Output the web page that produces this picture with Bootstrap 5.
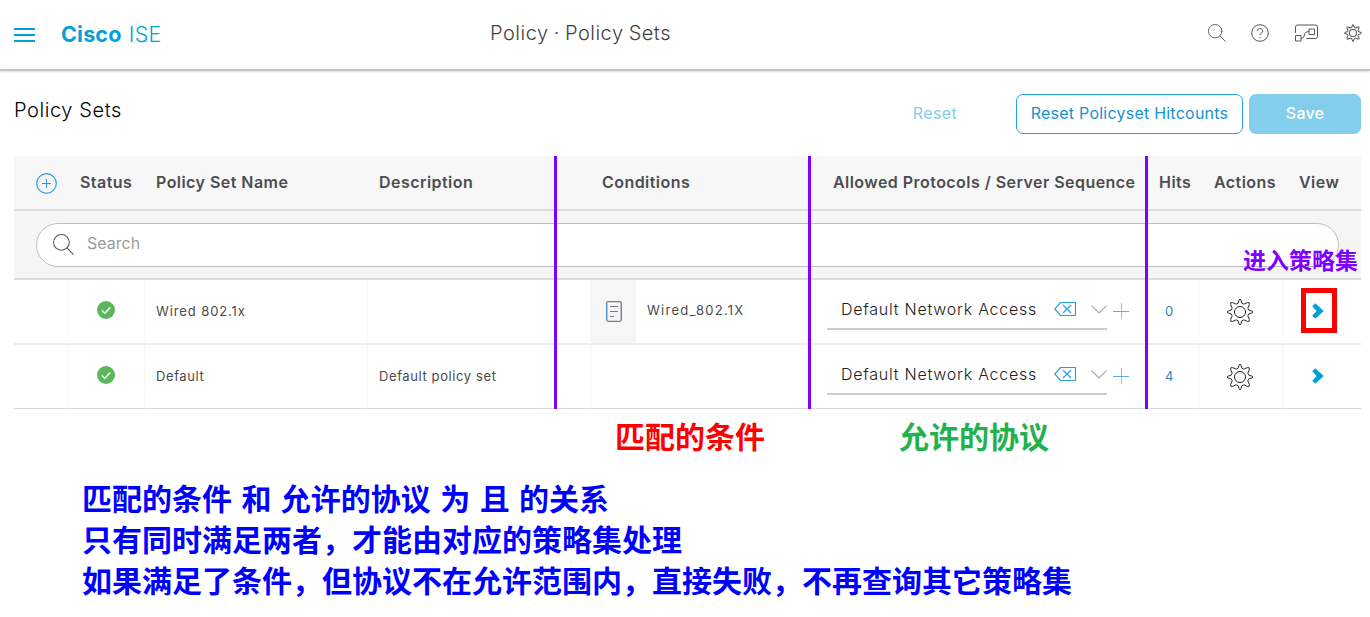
<!DOCTYPE html>
<html lang="zh-CN">
<head>
<meta charset="utf-8">
<meta name="viewport" content="width=device-width, initial-scale=1">
<title>Cisco ISE - Policy Sets</title>
<link href="https://cdn.jsdelivr.net/npm/bootstrap@5.3.0/dist/css/bootstrap.min.css" rel="stylesheet">
<style>
  body { font-family: Inter, "Noto Sans CJK SC", sans-serif; color: #4a4a4c; background: #fff; overflow: hidden; height: 617px; }
  svg { display: block; flex: none; overflow: visible; }
  .topbar { height: 71px; border-bottom: 2px solid #c6c6c6; box-shadow: 0 1px 2px rgba(0,0,0,.12); padding: 0 8px 0 14px; }
  .brand { width: 429px; margin: -2px 0 0 26px; font-size: 21.5px; font-weight: 300; color: #049fd9; line-height: 30px; letter-spacing: .2px; word-spacing: 1px; }
  .brand b { font-weight: 700; }
  .crumb { font-size: 20px; font-weight: 300; color: #3f3f41; line-height: 30px; letter-spacing: .5px; word-spacing: -1px; margin-top: -4px; }
  .tools { color: #58585b; margin-top: -3px; }
  .tool-find { margin-right: 25px; }
  .tool-map { margin: 0 25px 0 26px; }
  .heading { height: 85px; padding: 23px 9px 0 14px; }
  .heading h1 { font-size: 20px; font-weight: 300; color: #000; letter-spacing: .58px; line-height: 33px; margin: 0; }
  .act { height: 40px; border-radius: 7px; font-size: 16px; padding: 0; letter-spacing: .4px; line-height: 36px; padding-bottom: 2px; }
  .act-reset { width: 104px; color: #82ceeb; border: 0; margin-right: 29px; }
  .act-hits { width: 227px; color: #1494d0; border: 1px solid #1fa6dc; margin-right: 6px; letter-spacing: .23px; }
  .act-save { width: 112px; color: #fff; background: #82ceeb; border: 0; font-weight: 500; letter-spacing: .2px; }
  .policy { margin: 0 9px 0 14px; }
  .grid-t { table-layout: fixed; width: 1347px; margin: 0; border-collapse: separate; border-spacing: 0; --bs-table-bg: transparent; }
  .grid-t > :not(caption) > * > * { padding: 0 0 0 11px; border: 0; vertical-align: middle; white-space: nowrap; }
  .grid-t thead > tr > th { height: 55px; padding-bottom: 2px; background: #f7f7f7; border-bottom: 2px solid #dcdcdc; font-size: 16px; font-weight: 600; color: #4d4d50; letter-spacing: .45px; }
  .grid-t thead > tr > td { height: 69px; background: #f5f5f5; border-bottom: 2px solid #dcdcdc; padding: 0 22px; }
  .grid-t tbody > tr > td { height: 65px; border-bottom: 2px solid #ececec; border-right: 1px solid #f7f7f7; font-size: 13px; letter-spacing: .6px; color: #4a4a4c; }
  .grid-t tbody > tr:last-child > td { height: 64px; border-bottom: 1px solid #d8d8d8; }
  .grid-t tbody > tr > td:last-child { border-right: 0; }
  .grid-t .h-prot { padding-left: 17px; }
  .grid-t .h-hits { padding-left: 12px; }
  .grid-t .h-act { padding-left: 15px; }
  .grid-t .h-view { padding-left: 16px; }
  .grid-t .c-status { padding: 0 0 3px 28px; }
  .grid-t tbody > tr > .c-name { letter-spacing: .9px; }
  .grid-t .c-hit { padding-left: 18px; }
  .grid-t .c-gear { padding: 1px 0 0 27px; }
  .grid-t .c-go { padding: 0 0 2px 18px; }
  .grid-t .c-prot { padding-bottom: 1px; }
  .add-icon { margin: 4px 0 0 11px; }
  .finder { height: 44px; border: 1.5px solid #bdbdbd; border-radius: 22px; background: #fff; padding-left: 16px; font-size: 16px; color: #9a9a9c; }
  .finder-text { margin: -4px 0 0 13px; }
  .cond-icon { width: 45px; height: 63px; padding-bottom: 1px; background: #f6f6f6; }
  .cond-name { margin-left: 11px; padding-bottom: 2px; letter-spacing: 1.25px; }
  .picker { width: 280px; height: 38px; border-bottom: 2px solid #ccc; padding: 0 0 2px 14px; font-size: 16px; font-weight: 300; color: #222; letter-spacing: .75px; }
  .clr { margin-left: 17px; }
  .dwn { margin-left: 15px; }
  .pls { margin-left: 6px; }
  .hit { color: #2a84bd; font-size: 13px; }
  .go { width: 36px; height: 45px; border: 5px solid transparent; }
  .go-hot { border-color: #f00; }
  .go svg { margin-left: -2px; }
  .rule { position: absolute; top: 0; width: 3px; height: 253px; background: #8000ff; }
  .rule-a { left: 540px; }
  .rule-b { left: 794px; }
  .rule-c { left: 1131px; }
  .tag-enter { position: absolute; right: 3px; top: 86px; font-size: 23px; line-height: 34px; color: #8000ff; white-space: nowrap; }
  .tag-enter, .captions, .remarks { font-family: "Noto Sans CJK SC", sans-serif; font-weight: 700; }
  .captions { font-size: 30px; line-height: 42px; padding-top: 5px; padding-left: 615px; gap: 134px; }
  .captions .c-cond { color: #f00; }
  .captions .c-allow { color: #22b14c; }
  .remarks { font-size: 30px; line-height: 41px; color: #00f; padding: 21px 0 0 82px; word-spacing: 2.6px; white-space: nowrap; }
</style>
</head>
<body>
<svg width="0" height="0" class="position-absolute" aria-hidden="true">
  <symbol id="i-search" viewBox="0 0 20 20"><g fill="none" stroke="currentColor" stroke-linecap="round"><circle cx="8" cy="8" r="7.500"/><path d="M13.300 13.300l6 6"/></g></symbol>
  <symbol id="i-gear" viewBox="0 0 28 28"><g fill="none" stroke="currentColor" stroke-linejoin="round"><circle cx="14" cy="14" r="5.5"/><path d="M14 1C16 2.500 14.800 5.800 17.300 6C19.300 6.500 20.500 3.700 23.200 4.800C24.300 7.500 21.500 8.700 22 10.700C22.200 13.200 25.500 12 27 14C25.500 16 22.200 14.800 22 17.300C21.500 19.300 24.300 20.500 23.200 23.200C20.500 24.300 19.300 21.500 17.300 22C14.800 22.200 16 25.500 14 27C12 25.500 13.200 22.200 10.700 22C8.700 21.500 7.500 24.300 4.800 23.200C3.700 20.500 6.500 19.300 6 17.300C5.800 14.800 2.500 16 1 14C2.500 12 5.800 13.200 6 10.700C6.500 8.700 3.700 7.500 4.800 4.800C7.500 3.700 8.700 6.500 10.700 6C13.200 5.800 12 2.500 14 1Z"/></g></symbol>
  <symbol id="i-ok" viewBox="0 0 18 18"><circle cx="9" cy="9" r="9" fill="#5bb75b"/><path d="M5 9.500l2.800 2.800L13.300 6.500" fill="none" stroke="#fff" stroke-width="1.400"/></symbol>
  <symbol id="i-clear" viewBox="0 0 22 14"><path d="M6.500 .5H21.500V13.500H6.500L.7 7ZM9 3l8 8M17 3L9 11" fill="none" stroke="#2a9fd8" stroke-width="1.200"/></symbol>
  <symbol id="i-down" viewBox="0 0 16 9"><path d="M.5 .7L8 8L15.500 .7" fill="none" stroke="#a6a6a8" stroke-width="1.100"/></symbol>
  <symbol id="i-plus" viewBox="0 0 16 16"><path d="M8.500 0V16" stroke="#9db8dc" fill="none"/><path d="M0 8.500H16" stroke="#5aaee0" fill="none"/></symbol>
  <symbol id="i-next" viewBox="0 0 12 16"><path d="M3.300 .2L11.700 8L3.300 15.800L.2 12.800L4.600 8L.2 3.200Z" fill="#049fd9"/></symbol>
</svg>

<header class="topbar d-flex align-items-center">
  <svg width="21" height="14"><path d="M0 1H21M0 7H21M0 13H21" stroke="#049fd9" stroke-width="2"/></svg>
  <div class="brand"><b>Cisco</b> ISE</div>
  <div class="crumb">Policy · Policy Sets</div>
  <div class="tools d-flex align-items-center ms-auto">
    <svg width="18" height="18" class="tool-find"><use href="#i-search"/></svg>
    <svg width="18" height="18" viewBox="0 0 18 18" fill="none" stroke="currentColor"><circle cx="9" cy="9" r="8.300"/><path d="M6.300 7A2.700 2.500 0 1 1 10.200 9.200Q9 9.900 9 11.400M9 13V14.300"/></svg>
    <svg width="24" height="18" viewBox="0 0 24 18" fill="none" stroke="currentColor" class="tool-map"><path d="M.5 9V3Q.5 1 2.500 1H20.500Q22.500 1 22.500 3V12.500Q22.500 14.500 20.500 14.500H11.500M.5 11.500H6V17H.5ZM14 5H19.500V10.500H14ZM6 14.500Q8.500 14.500 9.200 12L10 9.500Q10.700 7.500 14 7.500"/></svg>
    <svg width="18" height="18"><use href="#i-gear" stroke-width="1.600"/></svg>
  </div>
</header>

<section class="heading d-flex align-items-start">
  <h1>Policy Sets</h1>
  <button class="btn act act-reset ms-auto" type="button">Reset</button>
  <button class="btn act act-hits" type="button">Reset Policyset Hitcounts</button>
  <button class="btn act act-save" type="button">Save</button>
</section>

<main>
  <div class="policy position-relative">
    <table class="table grid-t">
      <colgroup><col style="width:55px"><col style="width:76px"><col style="width:223px"><col style="width:223px"><col style="width:225px"><col style="width:331px"><col style="width:52px"><col style="width:84px"><col style="width:78px"></colgroup>
      <thead>
        <tr>
          <th><svg width="21" height="21" viewBox="0 0 21 21" fill="none" stroke="#2a9fd8" class="add-icon"><circle cx="10.500" cy="10.500" r="9.800" stroke-width="1.200"/><path d="M10.500 6V15M6 10.500H15"/></svg></th>
          <th>Status</th><th>Policy Set Name</th><th>Description</th><th>Conditions</th>
          <th class="h-prot">Allowed Protocols / Server Sequence</th><th class="h-hits">Hits</th><th class="h-act">Actions</th><th class="h-view">View</th>
        </tr>
        <tr><td colspan="9"><div class="finder d-flex align-items-center"><svg width="21" height="21" color="#555"><use href="#i-search"/></svg><span class="finder-text">Search</span></div></td></tr>
      </thead>
      <tbody>
        <tr>
          <td></td>
          <td class="c-status"><svg width="18" height="18"><use href="#i-ok"/></svg></td>
          <td class="c-name">Wired 802.1x</td>
          <td></td>
          <td class="p-0"><div class="d-flex align-items-center"><div class="cond-icon d-flex align-items-center justify-content-center"><svg width="16" height="21" viewBox="0 0 16 21" fill="none" stroke="#79798a"><rect x=".7" y=".7" width="14.600" height="19.600" rx="1.500" stroke-width="1.200"/><path d="M.7 2V19" stroke="#3e9bd0"/><path d="M15.300 2V19" stroke="#a06aa8"/><path d="M4 5.500H12M4 10.500H12M4 15.500H8"/></svg></div><span class="cond-name">Wired_802.1X</span></div></td>
          <td class="c-prot"><div class="d-flex align-items-center"><div class="picker d-flex align-items-center"><span>Default Network Access</span><svg width="22" height="14" class="clr"><use href="#i-clear"/></svg><svg width="16" height="9" class="dwn"><use href="#i-down"/></svg></div><svg width="16" height="16" class="pls"><use href="#i-plus"/></svg></div></td>
          <td class="c-hit"><span class="hit">0</span></td>
          <td class="c-gear"><svg width="28" height="28" color="#222"><use href="#i-gear"/></svg></td>
          <td class="c-go"><div class="go go-hot d-flex align-items-center justify-content-center"><svg width="12" height="16"><use href="#i-next"/></svg></div></td>
        </tr>
        <tr>
          <td></td>
          <td class="c-status"><svg width="18" height="18"><use href="#i-ok"/></svg></td>
          <td>Default</td>
          <td>Default policy set</td>
          <td></td>
          <td class="c-prot"><div class="d-flex align-items-center"><div class="picker d-flex align-items-center"><span>Default Network Access</span><svg width="22" height="14" class="clr"><use href="#i-clear"/></svg><svg width="16" height="9" class="dwn"><use href="#i-down"/></svg></div><svg width="16" height="16" class="pls"><use href="#i-plus"/></svg></div></td>
          <td class="c-hit"><span class="hit">4</span></td>
          <td class="c-gear"><svg width="28" height="28" color="#222"><use href="#i-gear"/></svg></td>
          <td class="c-go"><div class="go d-flex align-items-center justify-content-center"><svg width="12" height="16"><use href="#i-next"/></svg></div></td>
        </tr>
      </tbody>
    </table>
    <div class="rule rule-a"></div>
    <div class="rule rule-b"></div>
    <div class="rule rule-c"></div>
    <div class="tag-enter">进入策略集</div>
  </div>
  <div class="captions d-flex"><span class="c-cond">匹配的条件</span><span class="c-allow">允许的协议</span></div>
  <div class="remarks">
    <div>匹配的条件 和 允许的协议 为 且 的关系</div>
    <div>只有同时满足两者，才能由对应的策略集处理</div>
    <div>如果满足了条件，但协议不在允许范围内，直接失败，不再查询其它策略集</div>
  </div>
</main>
<script src="https://cdn.jsdelivr.net/npm/bootstrap@5.3.0/dist/js/bootstrap.bundle.min.js"></script>
</body>
</html>
